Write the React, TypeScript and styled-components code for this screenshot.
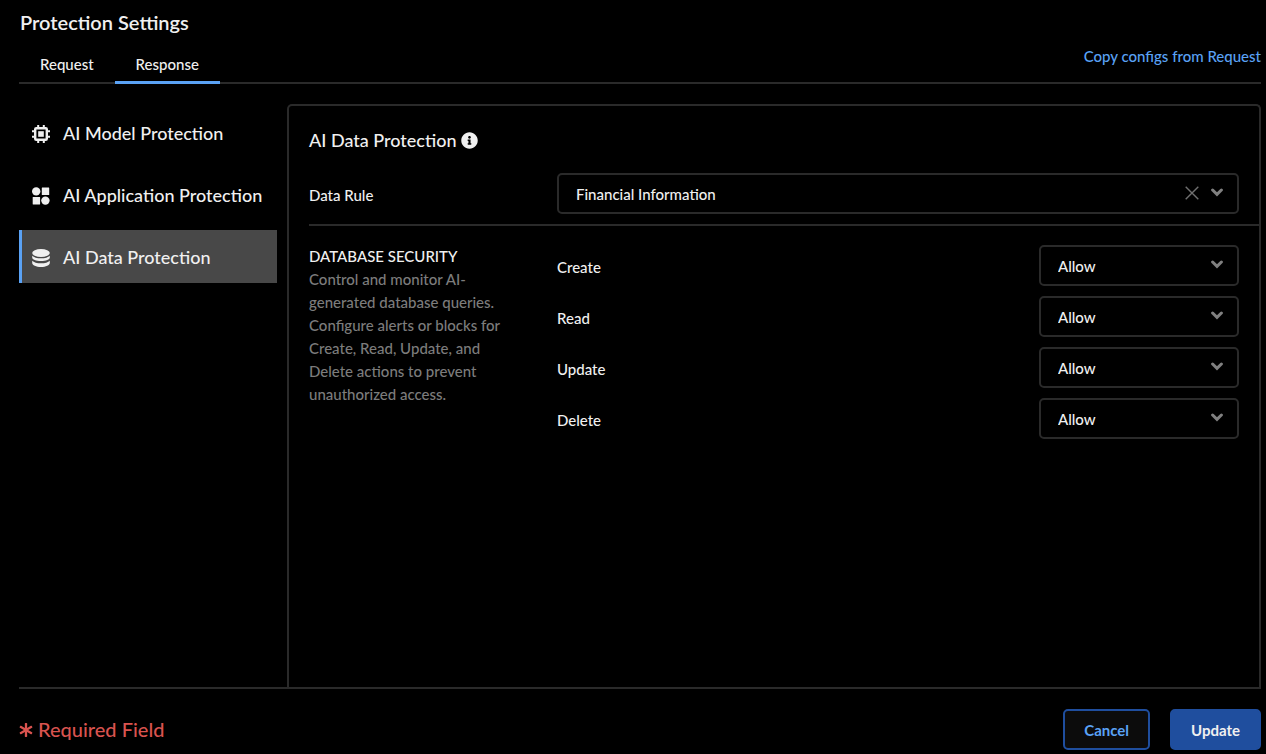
import React, { useState } from "react";
import styled, { createGlobalStyle, css } from "styled-components";
import { FaAsterisk, FaInfoCircle } from "react-icons/fa";

const colors = {
  line: "#2a2a2a",
  text: "#f0f0f0",
  muted: "#7c7c7c",
  accent: "#5aa2f5",
  primary: "#1f4e9e",
  danger: "#d9534f",
};

const GlobalStyle = createGlobalStyle`
  *, *::before, *::after { box-sizing: border-box; }
  body { margin: 0; background: #000; }
  body, button, select { font-family: Lato, "Liberation Sans", sans-serif; }
`;

const Page = styled.div`
  display: flex;
  flex-direction: column;
  min-height: 100vh;
  padding: 0 5px 4px 19px;
  color: ${colors.text};
  font-size: 15px;
  font-weight: 500;
  line-height: 23px;
`;

const Header = styled.header`
  display: flex;
  justify-content: space-between;
  align-items: flex-end;
  border-bottom: 2px solid ${colors.line};
`;

const Title = styled.h1`
  margin: 0;
  padding: 8px 0 0 1px;
  font-size: 20px;
  font-weight: 600;
  line-height: 28px;
`;

const Tabs = styled.nav`
  display: flex;
  margin-bottom: -2px;
`;

const Tab = styled.button<{ $active?: boolean }>`
  padding: 17px 21px 5px;
  border: 0;
  border-bottom: 3px solid ${(p) => (p.$active ? colors.accent : "transparent")};
  background: none;
  color: ${colors.text};
  font-size: 15px;
  font-weight: 500;
  line-height: 23px;
  cursor: pointer;
`;

const CopyLink = styled.a`
  padding-bottom: 14px;
  color: ${colors.accent};
  text-decoration: none;
`;

const Main = styled.main`
  display: flex;
  flex: 1;
  gap: 10px;
  padding-top: 20px;
  border-bottom: 2px solid ${colors.line};
`;

const Sidebar = styled.nav`
  display: flex;
  flex: 0 0 258px;
  flex-direction: column;
  gap: 9px;
  padding-top: 2px;
`;

const SideItem = styled.button<{ $active?: boolean }>`
  display: flex;
  align-items: center;
  gap: 12px;
  height: 53px;
  padding: 0 0 0 9px;
  border: 0;
  border-left: 3px solid ${(p) => (p.$active ? colors.accent : "transparent")};
  background: ${(p) => (p.$active ? "#484848" : "none")};
  color: ${colors.text};
  font-size: 18px;
  font-weight: 500;
  text-align: left;
  cursor: pointer;

  svg {
    flex: none;
    margin-top: 3px;
  }
`;

const Panel = styled.section`
  flex: 1;
  border: 2px solid ${colors.line};
  border-bottom: 0;
  border-radius: 5px 5px 0 0;
  padding-left: 20px;
`;

const PanelTitle = styled.h2`
  display: flex;
  align-items: center;
  gap: 4px;
  margin: 0;
  padding: 20px 0 19px;
  font-size: 18px;
  font-weight: 500;
  line-height: 28px;
`;

const columns = css`
  display: grid;
  grid-template-columns: 248px 1fr;
  padding-right: 20px;
`;

const RuleRow = styled.div`
  ${columns}
  align-items: center;
  padding-bottom: 10px;
  border-bottom: 2px solid ${colors.line};
`;

const SecurityRow = styled.div`
  ${columns}
  padding-top: 19px;
`;

const FieldLabel = styled.label`
  padding-top: 3px;
`;

const Description = styled.div`
  width: 208px;
  color: ${colors.muted};
`;

const SectionName = styled.h3`
  margin: 0;
  color: ${colors.text};
  font-size: 15px;
  font-weight: 500;
`;

const ActionList = styled.div`
  display: flex;
  flex-direction: column;
  gap: 10px;
`;

const ActionRow = styled.div`
  display: flex;
  justify-content: space-between;
  align-items: center;
`;

const SelectBox = styled.div<{ $width?: string }>`
  position: relative;
  width: ${(p) => p.$width ?? "100%"};
`;

const Select = styled.select`
  display: block;
  width: 100%;
  height: 41px;
  padding: 0 60px 0 17px;
  appearance: none;
  border: 2px solid ${colors.line};
  border-radius: 5px;
  background: #000;
  color: ${colors.text};
  font-size: 15px;
  font-weight: 500;
`;

const Indicators = styled.div`
  position: absolute;
  inset: 0 16px 2px auto;
  display: flex;
  align-items: center;
  gap: 12px;
  color: #808080;
  pointer-events: none;
`;

const ClearButton = styled.button`
  display: flex;
  padding: 0;
  border: 0;
  background: none;
  color: #707070;
  pointer-events: auto;
  cursor: pointer;
`;

const Footer = styled.footer`
  display: flex;
  justify-content: space-between;
  align-items: center;
  padding-top: 20px;
`;

const Required = styled.p`
  display: flex;
  align-items: center;
  gap: 5px;
  margin: 0;
  color: ${colors.danger};
  font-size: 20px;
`;

const Actions = styled.div`
  display: flex;
  gap: 20px;
`;

const Button = styled.button<{ $primary?: boolean }>`
  height: 41px;
  padding: 0 19px;
  border: 2px solid ${colors.primary};
  border-radius: 5px;
  background: ${(p) => (p.$primary ? colors.primary : "#0c0c0c")};
  color: ${(p) => (p.$primary ? colors.text : colors.accent)};
  font-size: 15px;
  font-weight: 700;
  cursor: pointer;
`;

const ChevronIcon = () => (
  <svg width="12" height="9" viewBox="0 0 12 9" fill="none" stroke="currentColor" strokeWidth="3" aria-hidden>
    <path d="M1.6 2 6 6.4 10.4 2" strokeLinecap="round" />
  </svg>
);

const ClearIcon = () => (
  <svg width="14" height="14" viewBox="0 0 14 14" fill="none" stroke="currentColor" strokeWidth="1.4" aria-hidden>
    <path d="M.7.7l12.6 12.6M13.3.7.7 13.3" />
  </svg>
);

const ChipIcon = () => (
  <svg width="20" height="20" viewBox="0 0 20 20" aria-hidden>
    <rect x="4.2" y="4.2" width="11.600" height="11.600" rx="1" fill="none" stroke="currentColor" strokeWidth="2.400" />
    <rect x="7.200" y="7.200" width="5.600" height="5.600" fill="currentColor" />
    <path
      d="M7.200 1v3M12.800 1v3M7.200 16v3M12.800 16v3M1 7.200h3M1 12.800h3M16 7.200h3M16 12.800h3"
      stroke="currentColor"
      strokeWidth="2"
    />
  </svg>
);

const ShapesIcon = () => (
  <svg width="20" height="20" viewBox="0 0 20 20" fill="currentColor" aria-hidden>
    <circle cx="5.2" cy="5.4" r="4.2" />
    <rect x="10.800" y="1.600" width="7.400" height="7.400" rx=".3" />
    <rect x="1.700" y="11" width="7.400" height="7.400" rx=".3" />
    <circle cx="14.400" cy="14.600" r="4.200" />
  </svg>
);

const DatabaseIcon = () => (
  <svg width="20" height="20" viewBox="0 0 20 20" fill="currentColor" aria-hidden>
    <ellipse cx="10" cy="5" rx="8.8" ry="4" />
    <path d="M1.2 7.7c1.6 1.7 4.8 2.6 8.8 2.6s7.2-.9 8.8-2.6v1.8c0 2-3.9 3.6-8.8 3.6s-8.8-1.6-8.8-3.6z" />
    <path d="M1.2 12.7c1.6 1.7 4.8 2.6 8.8 2.6s7.2-.9 8.8-2.6v2.2c0 2.2-3.9 4-8.8 4s-8.8-1.8-8.8-4z" />
  </svg>
);

const sections = [
  { name: "AI Model Protection", icon: <ChipIcon /> },
  { name: "AI Application Protection", icon: <ShapesIcon /> },
  { name: "AI Data Protection", icon: <DatabaseIcon /> },
];

const operations = ["Create", "Read", "Update", "Delete"];

export default function App() {
  const [tab, setTab] = useState("Response");
  const [section, setSection] = useState("AI Data Protection");
  const [rule, setRule] = useState("Financial Information");

  return (
    <>
      <GlobalStyle />
      <Page>
        <Header>
          <div>
            <Title>Protection Settings</Title>
            <Tabs>
              {["Request", "Response"].map((name) => (
                <Tab key={name} $active={tab === name} onClick={() => setTab(name)}>
                  {name}
                </Tab>
              ))}
            </Tabs>
          </div>
          <CopyLink href="#request">Copy configs from Request</CopyLink>
        </Header>
        <Main>
          <Sidebar>
            {sections.map(({ name, icon }) => (
              <SideItem key={name} $active={section === name} onClick={() => setSection(name)}>
                {icon}
                {name}
              </SideItem>
            ))}
          </Sidebar>
          <Panel>
            <PanelTitle>
              AI Data Protection <FaInfoCircle size={17} />
            </PanelTitle>
            <RuleRow>
              <FieldLabel htmlFor="rule">Data Rule</FieldLabel>
              <SelectBox>
                <Select id="rule" value={rule} onChange={(e) => setRule(e.target.value)}>
                  <option value=""></option>
                  <option>Financial Information</option>
                </Select>
                <Indicators>
                  <ClearButton aria-label="Clear" onClick={() => setRule("")}>
                    <ClearIcon />
                  </ClearButton>
                  <ChevronIcon />
                </Indicators>
              </SelectBox>
            </RuleRow>
            <SecurityRow>
              <Description>
                <SectionName>DATABASE SECURITY</SectionName>
                Control and monitor AI-generated database queries. Configure alerts or blocks for
                Create, Read, Update, and Delete actions to prevent unauthorized access.
              </Description>
              <ActionList>
                {operations.map((name) => (
                  <ActionRow key={name}>
                    <FieldLabel htmlFor={name}>{name}</FieldLabel>
                    <SelectBox $width="200px">
                      <Select id={name} defaultValue="Allow">
                        <option>Allow</option>
                        <option>Alert</option>
                        <option>Block</option>
                      </Select>
                      <Indicators>
                        <ChevronIcon />
                      </Indicators>
                    </SelectBox>
                  </ActionRow>
                ))}
              </ActionList>
            </SecurityRow>
          </Panel>
        </Main>
        <Footer>
          <Required>
            <FaAsterisk size={14} />
            Required Field
          </Required>
          <Actions>
            <Button>Cancel</Button>
            <Button $primary>Update</Button>
          </Actions>
        </Footer>
      </Page>
    </>
  );
}
